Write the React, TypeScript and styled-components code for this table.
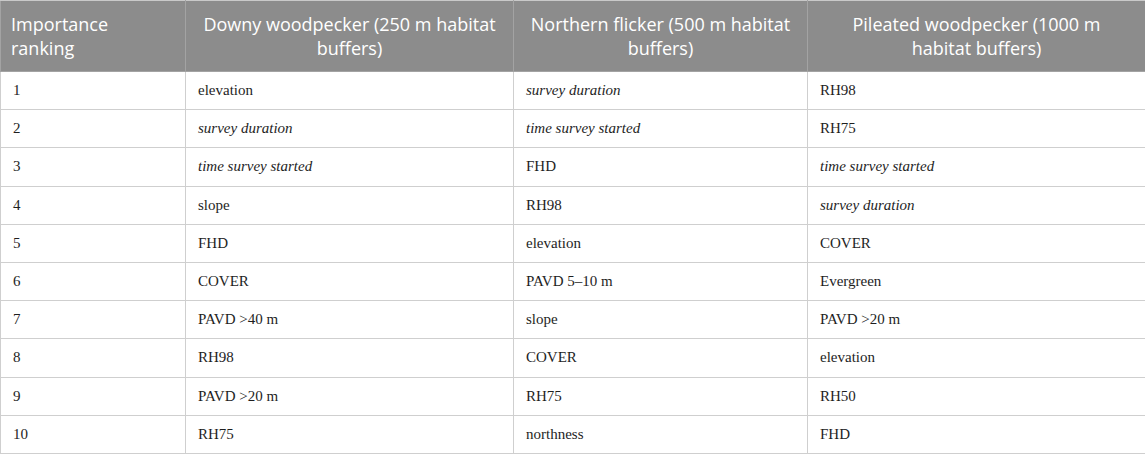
import React from "react";
import styled, { createGlobalStyle } from "styled-components";

const Global = createGlobalStyle`
  html, body { margin: 0; padding: 0; background: #ffffff; }
`;

const Table = styled.table`
  width: 1145px;
  border-collapse: collapse;
  table-layout: fixed;
  border: 1px solid #c9c9c9;
`;

const Col = styled.col<{ $w: number }>`
  width: ${(p) => p.$w}px;
`;

const HeadCell = styled.th<{ $left?: boolean }>`
  height: 70px;
  padding: 0 10px;
  background: #8c8c8c;
  color: #ffffff;
  font-family: "Open Sans", "Liberation Sans", sans-serif;
  font-weight: 400;
  font-size: 18px;
  line-height: 24px;
  text-align: ${(p) => (p.$left ? "left" : "center")};
  vertical-align: middle;
  border: 1px solid #a3a3a3;
  border-top-color: #c9c9c9;
`;

const Row = styled.tr`
  height: 38.2px;
`;

const Cell = styled.td<{ $italic?: boolean }>`
  padding: 0 12px;
  font-family: "Liberation Serif", "Times New Roman", serif;
  font-size: 15px;
  font-style: ${(p) => (p.$italic ? "italic" : "normal")};
  color: #1e1e1e;
  border: 1px solid #cfcfcf;
  vertical-align: middle;
  white-space: nowrap;
`;

const ITALIC = new Set(["survey duration", "time survey started"]);

const rows: string[][] = [
  ["1", "elevation", "survey duration", "RH98"],
  ["2", "survey duration", "time survey started", "RH75"],
  ["3", "time survey started", "FHD", "time survey started"],
  ["4", "slope", "RH98", "survey duration"],
  ["5", "FHD", "elevation", "COVER"],
  ["6", "COVER", "PAVD 5–10 m", "Evergreen"],
  ["7", "PAVD >40 m", "slope", "PAVD >20 m"],
  ["8", "RH98", "COVER", "elevation"],
  ["9", "PAVD >20 m", "RH75", "RH50"],
  ["10", "RH75", "northness", "FHD"],
];

export default function App() {
  return (
    <>
      <Global />
      <Table>
        <colgroup>
          <Col $w={185} />
          <Col $w={328} />
          <Col $w={294} />
          <Col $w={338} />
        </colgroup>
        <thead>
          <tr>
            <HeadCell $left>
              Importance
              <br />
              ranking
            </HeadCell>
            <HeadCell>
              Downy woodpecker (250 m habitat
              <br />
              buffers)
            </HeadCell>
            <HeadCell>
              Northern flicker (500 m habitat
              <br />
              buffers)
            </HeadCell>
            <HeadCell>
              Pileated woodpecker (1000 m
              <br />
              habitat buffers)
            </HeadCell>
          </tr>
        </thead>
        <tbody>
          {rows.map((r) => (
            <Row key={r[0]}>
              {r.map((c, i) => (
                <Cell key={i} $italic={ITALIC.has(c)}>
                  {c}
                </Cell>
              ))}
            </Row>
          ))}
        </tbody>
      </Table>
    </>
  );
}
